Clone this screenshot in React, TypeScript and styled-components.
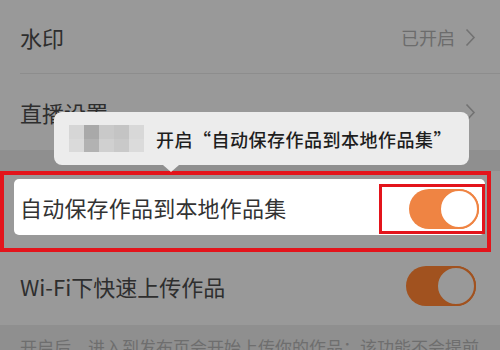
import React from "react";
import styled, { createGlobalStyle } from "styled-components";

const Global = createGlobalStyle`
  html, body { margin: 0; padding: 0; background: #999999; }
  body { font-family: "Noto Sans CJK SC", "Noto Sans", sans-serif; }
`;

const Page = styled.div`
  position: relative;
  width: 500px;
  height: 350px;
  overflow: hidden;
  background: #999999;
  display: flex;
  flex-direction: column;
`;

const Row = styled.div<{ $h: number; $divider?: boolean; $pb?: number }>`
  height: ${(p) => p.$h}px;
  flex: none;
  display: flex;
  align-items: center;
  padding: 0 24px ${(p) => p.$pb ?? 0}px 20px;
  box-sizing: border-box;
  position: relative;
  ${(p) =>
    p.$divider
      ? `&::after { content: ""; position: absolute; left: 20px; right: 0; bottom: 0; height: 1px; background: #8d8d8d; }`
      : ""}
`;

const Label = styled.span`
  font-size: 22px;
  color: #2e2e2e;
  line-height: 1;
`;

const Value = styled.span`
  margin-left: auto;
  font-size: 18px;
  color: #6c6c6c;
  display: flex;
  align-items: center;
  gap: 10px;
`;

const Chevron = () => (
  <svg width="11" height="19" viewBox="0 0 11 19" fill="none">
    <path d="M1.5 1.5 L9 9.5 L1.5 17.5" stroke="#727272" strokeWidth="1.6" />
  </svg>
);

const GroupGap = styled.div<{ $h: number }>`
  height: ${(p) => p.$h}px;
  flex: none;
  background: #8f8f8f;
`;

const Frame = styled.div`
  flex: none;
  width: 491px;
  height: 81px;
  box-sizing: border-box;
  border: 4px solid #e3141b;
  padding: 4px 2px 0 10px;
`;

const Card = styled.div`
  height: 56px;
  background: #ffffff;
  border-radius: 5px;
  display: flex;
  align-items: center;
  padding-left: 6px;
`;

const CardLabel = styled.span`
  font-size: 22px;
  color: #333333;
  line-height: 1;
  letter-spacing: 0.2px;
`;

const MarkBox = styled.div`
  margin-left: auto;
  margin-top: 4px;
  width: 106px;
  height: 50px;
  box-sizing: border-box;
  border: 3px solid #e3141b;
  display: flex;
  align-items: center;
  justify-content: flex-end;
  padding-right: 3px;
`;

const Toggle = styled.div<{ $track: string; $knob: string }>`
  width: 70px;
  height: 40px;
  border-radius: 20px;
  background: ${(p) => p.$track};
  position: relative;
  flex: none;
  &::after {
    content: "";
    position: absolute;
    right: 0;
    top: 0;
    width: 40px;
    height: 40px;
    box-sizing: border-box;
    border-radius: 50%;
    background: ${(p) => p.$knob};
    border: 2px solid ${(p) => p.$track};
  }
`;

const Footer = styled.div`
  flex: 1;
  background: #8f8f8f;
  padding: 10px 0 0 20px;
  font-size: 17px;
  color: #6e6e6e;
  white-space: nowrap;
  line-height: 24px;
`;

const Tooltip = styled.div`
  position: absolute;
  left: 54px;
  top: 112px;
  width: 415px;
  height: 53px;
  background: #ececec;
  border-radius: 8px;
  display: flex;
  align-items: center;
  padding-left: 15px;
  box-sizing: border-box;
  &::after {
    content: "";
    position: absolute;
    left: 109px;
    bottom: -7px;
    border-left: 8px solid transparent;
    border-right: 8px solid transparent;
    border-top: 7px solid #ececec;
  }
`;

const Mosaic = styled.div`
  display: grid;
  grid-template-columns: repeat(5, 15px);
  grid-template-rows: repeat(2, 13.5px);
  width: 75px;
`;

const Cell = styled.div<{ $c: string }>`
  background: ${(p) => p.$c};
`;

const TipText = styled.span`
  margin-left: 12px;
  font-size: 18px;
  font-weight: 500;
  color: #1e1e1e;
  letter-spacing: 0.5px;
`;

const mosaic = [
  "#d6d6d6", "#a9a9a9", "#c9c9c9", "#c4c4c4", "#d8d8d8",
  "#dadada", "#b2b2b2", "#d0d0d0", "#c9c9c9", "#dbdbdb",
];

export default function App() {
  return (
    <>
      <Global />
      <Page>
        <Row $h={74} $divider>
          <Label>水印</Label>
          <Value>
            已开启
            <Chevron />
          </Value>
        </Row>
        <Row $h={76} $pb={0}>
          <Label>直播设置</Label>
          <Value>
            <Chevron />
          </Value>
        </Row>
        <GroupGap $h={21} />
        <Frame>
          <Card>
            <CardLabel>自动保存作品到本地作品集</CardLabel>
            <MarkBox>
              <Toggle $track="#ef8443" $knob="#ffffff" />
            </MarkBox>
          </Card>
        </Frame>
        <Row $h={73} $pb={6}>
          <Label>Wi-Fi下快速上传作品</Label>
          <Value>
            <Toggle $track="#a1521f" $knob="#999999" />
          </Value>
        </Row>
        <Footer>开启后，进入到发布页会开始上传你的作品；该功能不会提前</Footer>
        <Tooltip>
          <Mosaic>
            {mosaic.map((c, i) => (
              <Cell key={i} $c={c} />
            ))}
          </Mosaic>
          <TipText>开启“自动保存作品到本地作品集”</TipText>
        </Tooltip>
      </Page>
    </>
  );
}
